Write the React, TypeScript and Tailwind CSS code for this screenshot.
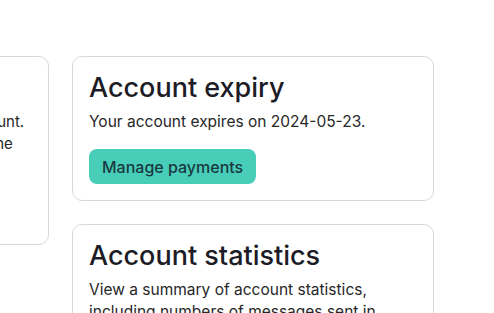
import React from "react";

const font = { fontFamily: "Inter, 'Noto Sans', sans-serif" };

export default function App() {
  return (
    <div className="w-full h-[313px] overflow-hidden bg-white" style={font}>
      <div className="flex items-start gap-[23px] pt-[56px] ml-[-313px]">
        <div className="w-[362px] shrink-0 rounded-[10px] border border-[#d9d9d9] p-4">
          <h2 className="text-[27px] leading-[30px] font-medium text-[#1c1c26]">Account details</h2>
          <p className="mt-2 text-[15px] leading-[22px] text-[#272727]">
            Update the personal details for your account.
            <br />
            This includes the name, address and phone
            <br />
            number and email address.
          </p>
          <button className="mt-4 h-[35px] rounded-lg bg-[#48cdb9] px-[13px] text-[16px] font-medium text-[#193a40]">
            Edit details
          </button>
        </div>
        <div className="flex w-[362px] shrink-0 flex-col gap-[23px]">
          <div className="rounded-[10px] border border-[#d9d9d9] p-4">
            <h2 className="text-[27px] leading-[30px] font-medium text-[#1c1c26]">Account expiry</h2>
            <p className="mt-2 text-[15.5px] leading-[22px] text-[#272727]">
              Your account expires on 2024-05-23.
            </p>
            <button className="mt-4 h-[35px] rounded-lg bg-[#48cdb9] px-[13px] text-[16px] font-medium text-[#193a40]">
              Manage payments
            </button>
          </div>
          <div className="rounded-[10px] border border-[#d9d9d9] p-4">
            <h2 className="text-[27px] leading-[30px] font-medium text-[#1c1c26]">Account statistics</h2>
            <p className="mt-2 text-[15.5px] leading-[22px] text-[#272727]">
              View a summary of account statistics, including numbers of messages sent in previous
              billing periods.
            </p>
            <button className="mt-4 h-[35px] rounded-lg bg-[#48cdb9] px-[13px] text-[16px] font-medium text-[#193a40]">
              View statistics
            </button>
          </div>
        </div>
      </div>
    </div>
  );
}
